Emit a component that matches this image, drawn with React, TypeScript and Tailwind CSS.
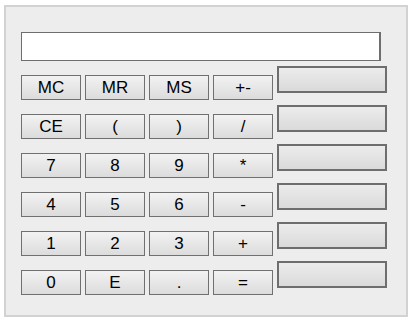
const KEYS = [
  ['MC', 'MR', 'MS', '+-'],
  ['CE', '(', ')', '/'],
  ['7', '8', '9', '*'],
  ['4', '5', '6', '-'],
  ['1', '2', '3', '+'],
  ['0', 'E', '.', '='],
];

export default function App() {
  return (
    <div className="w-[414px] h-[322px] bg-white pt-[5px] pl-[4px] font-['Liberation_Sans',Arial,sans-serif]">
      <div className="w-[404px] h-[312px] border-2 border-[#d2d2d2] bg-[#ededed] pl-[15px] pt-[25px]">
        {/* display */}
        <input
          readOnly
          className="block w-[360px] h-[29px] bg-white border border-r-2 border-[#6e6e6e] outline-none"
        />

        <div className="flex items-start gap-[4px]">
          {/* keypad */}
          <div className="mt-[14px] grid grid-cols-4 gap-x-[4px] gap-y-[14px]">
            {KEYS.flat().map((k) => (
              <button
                key={k}
                type="button"
                className="w-[60px] h-[25px] border border-[#707070] bg-gradient-to-b from-[#f2f2f2] to-[#dcdcdc] text-[17px] leading-none text-black flex items-center justify-center"
              >
                {k}
              </button>
            ))}
          </div>

          {/* memory slots */}
          <div className="mt-[5px] flex flex-col gap-[12px]">
            {[0, 1, 2, 3, 4, 5].map((i) => (
              <div
                key={i}
                className="w-[110px] h-[27px] border-2 border-[#6e6e6e] bg-gradient-to-b from-[#ececec] to-[#dadada]"
              />
            ))}
          </div>
        </div>
      </div>
    </div>
  );
}
